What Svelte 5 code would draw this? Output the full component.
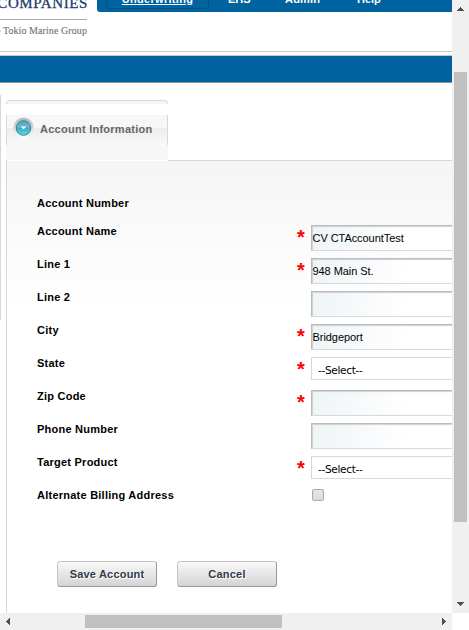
<script>
  const rows = [
    { label: 'Account Number', type: 'none' },
    { label: 'Account Name', type: 'text', value: 'CV CTAccountTest', required: true },
    { label: 'Line 1', type: 'text', value: '948 Main St.', required: true },
    { label: 'Line 2', type: 'text', value: '' },
    { label: 'City', type: 'text', value: 'Bridgeport', required: true },
    { label: 'State', type: 'select', value: '--Select--', required: true },
    { label: 'Zip Code', type: 'text', value: '', required: true },
    { label: 'Phone Number', type: 'text', value: '' },
    { label: 'Target Product', type: 'select', value: '--Select--', required: true },
    { label: 'Alternate Billing Address', type: 'check' }
  ];
</script>

<div class="window">
  <main class="view">
    <header>
      <div class="logo">
        <div class="company">COMPANIES</div>
        <div class="group">e Tokio Marine Group</div>
      </div>
      <nav>
        <a class="active"><span>Underwriting</span></a>
        <a class="ehs">EHS</a>
        <a class="admin">Admin</a>
        <a class="help">Help</a>
      </nav>
    </header>
    <div class="bar"></div>
    <div class="body">
      <div class="rail"></div>
      <section>
        <div class="tab-cap"></div>
        <div class="tab">
          <svg width="22" height="22" viewBox="0 0 22 22">
            <defs>
              <linearGradient id="ring" x1="0" y1="0" x2="0" y2="1">
                <stop offset="0" stop-color="#b5b5b5" />
                <stop offset=".5" stop-color="#d9d9d9" />
                <stop offset="1" stop-color="#ffffff" />
              </linearGradient>
              <linearGradient id="ball" x1="0" y1="0" x2="0" y2="1">
                <stop offset="0" stop-color="#4f9dbb" />
                <stop offset=".4" stop-color="#6dbbd0" />
                <stop offset=".52" stop-color="#38abc3" />
                <stop offset="1" stop-color="#66dde2" />
              </linearGradient>
            </defs>
            <circle cx="10.5" cy="11" r="10.3" fill="url(#ring)" />
            <circle cx="10.5" cy="11" r="7.3" fill="url(#ball)" stroke="#3083a3" />
            <path d="M7.8 9.5h5.4l-2.7 3z" fill="#fff" />
          </svg>
          <h2>Account Information</h2>
        </div>
        <form>
          {#each rows as row}
            <div class="row" class:first={row.type === 'none'}>
              <span class="label">{row.label}</span>
              <span class="req">{row.required ? '*' : ''}</span>
              {#if row.type === 'text'}
                <div class="input">{row.value}</div>
              {:else if row.type === 'select'}
                <div class="select">{row.value}</div>
              {:else if row.type === 'check'}
                <div class="box"></div>
              {/if}
            </div>
          {/each}
          <div class="actions">
            <div class="button">Save Account</div>
            <div class="button">Cancel</div>
          </div>
        </form>
      </section>
    </div>
  </main>
  <div class="vscroll">
    <svg width="7" height="4" shape-rendering="crispEdges"><path d="M3 0h1v1h1v1h1v1h1v1H0V3h1V2h1V1h1z" fill="#505050" /></svg>
    <div class="vthumb"></div>
    <svg class="down" width="7" height="4" shape-rendering="crispEdges"><path d="M0 0h7v1H6v1H5v1H4v1H3V3H2V2H1V1H0z" fill="#505050" /></svg>
  </div>
  <div class="hscroll">
    <svg width="4" height="7" shape-rendering="crispEdges"><path d="M4 0v7H3V6H2V5H1V4H0V3h1V2h1V1h1V0z" fill="#505050" /></svg>
    <div class="hthumb"></div>
    <svg class="right" width="4" height="7" shape-rendering="crispEdges"><path d="M0 0v7h1V6h1V5h1V4h1V3H3V2H2V1H1V0z" fill="#505050" /></svg>
  </div>
</div>

<style>
  :global(body) { margin: 0; overflow: hidden; background: #fff; }
  .window {
    width: 469px; height: 630px; overflow: hidden;
    display: grid; grid-template-columns: 452px 17px; grid-template-rows: 613px 17px;
    font-family: 'Liberation Sans', Arial, sans-serif; font-size: 11px; color: #000;
  }
  .view { overflow: hidden; display: flex; flex-direction: column; }
  header { height: 51px; flex: none; display: flex; border-bottom: 1px solid #c8c8c8; }
  .logo { width: 87px; margin-right: 10px; font-family: 'Liberation Serif', serif; display: flex; flex-direction: column; align-items: flex-end; }
  .company { margin-top: -6px; height: 25px; line-height: 19px; font-size: 15px; letter-spacing: .6px; margin-right: -1px; color: #1d3c6e; -webkit-text-stroke: .3px #1d3c6e; white-space: nowrap; }
  .group { width: 87px; border-top: 1px solid #aaa; padding-top: 4px; line-height: 14px; font-size: 10px; letter-spacing: .08px; color: #777; -webkit-text-stroke: .15px #777; white-space: nowrap; display: flex; justify-content: flex-end; }
  nav { width: 355px; height: 12px; background: #0063a0; border-bottom-left-radius: 3px; overflow: hidden; display: flex; color: #fff; font-weight: bold; font-size: 11px; }
  nav a { margin-top: -7px; line-height: 12px; height: 12px; }
  nav .active { box-sizing: border-box; width: 103px; height: 16px; margin-left: 9px; border: 1px solid #00508a; border-radius: 0 0 3px 3px; text-align: center; line-height: 11px; text-decoration: underline; letter-spacing: .3px; }
  nav .ehs { margin-left: 19px; width: 57px; }
  nav .admin { width: 72px; letter-spacing: .2px; }
  .bar { height: 26px; flex: none; margin-top: 3px; border-top: 1px solid #c8c8c8; border-bottom: 1px solid #909090; background: #0063a0; }
  .body { display: flex; flex: 1; }
  .rail { width: 1px; height: 225px; margin: 12px 5px 0 0; background: #d8d8d8; }
  section { width: 446px; padding-top: 17px; display: flex; flex-direction: column; }
  .tab-cap { box-sizing: border-box; width: 162px; height: 4px; border: 1px solid #d8d8d8; border-bottom: 0; border-radius: 4px 4px 0 0; background: #f6f6f6; }
  .tab {
    box-sizing: border-box; width: 162px; height: 45px; margin-top: 11px; padding-left: 7px;
    display: flex; align-items: flex-start;
    background:
      linear-gradient(#d8d8d8, #d8d8d8) 0 0 / 1px 30px no-repeat,
      linear-gradient(#d8d8d8, #d8d8d8) 161px 0 / 1px 30px no-repeat,
      linear-gradient(#ececec, #f7f7f7) 0 13px / 100% 13px no-repeat,
      #f7f7f7;
  }
  .tab svg { margin-top: 2px; }
  h2 { margin: 7px 0 0 5px; font-size: 11px; line-height: 14px; color: #666; letter-spacing: .26px; white-space: nowrap; }
  form {
    flex: 1; border-left: 1px solid #d8d8d8; padding: 29px 0 0 30px;
    background:
      linear-gradient(#d8d8d8, #d8d8d8) 161px 0 / 100% 1px no-repeat,
      linear-gradient(#fff, #fff) 0 0 / 161px 1px no-repeat,
      linear-gradient(#f5f5f5, #fff 145px);
    background-origin: padding-box;
  }
  .row { display: flex; height: 33px; }
  .row > * { flex: none; }
  .row.first { height: 36px; }
  .label { width: 260px; line-height: 12px; font-weight: bold; letter-spacing: .24px; white-space: nowrap; }
  .row.first .label { padding-top: 8px; }
  .req { width: 14px; height: 27px; color: #f00; font-weight: bold; font-size: 20px; line-height: 20px; padding-top: 2px; box-sizing: border-box; }
  .input, .select { box-sizing: border-box; width: 160px; white-space: nowrap; }
  .input { height: 26px; border: 1px solid #d8d8d8; border-top-color: #bbb; border-left-color: #bbb; box-shadow: inset 1px 1px 1px #d0d0d0; padding-left: .5px; line-height: 25px; letter-spacing: -.06px; background: linear-gradient(105deg, #eef4f7, #fff 60%); }
  .select { height: 23px; border: 1px solid #d8d8d8; background: #fff; padding-left: 6px; line-height: 24px; font-family: 'DejaVu Sans', sans-serif; font-size: 10.5px; letter-spacing: -.3px; }
  .box { box-sizing: border-box; width: 12px; height: 12px; margin: 0 0 0 1px; border: 1px solid #aaa; border-radius: 2px; background: linear-gradient(#e6e6e6, #dcdcdc); }
  .actions { display: flex; gap: 20px; padding: 39px 0 0 20px; }
  .button { box-sizing: border-box; width: 100px; height: 26px; border: 1px solid #c5c5c5; border-right-color: #999; border-bottom-color: #999; border-radius: 3px; background: linear-gradient(#f8f8f8, #d4d4d4); text-align: center; line-height: 25px; font-weight: bold; color: #303a4b; text-shadow: 1px 1px 0 #fff; letter-spacing: .2px; }
  .vscroll { background: #f0f0f0; display: flex; flex-direction: column; align-items: center; padding-top: 7px; box-sizing: border-box; }
  .vthumb { width: 13px; height: 450px; margin-top: 61px; background: #c0c0c0; }
  .down { margin-top: 80px; }
  .hscroll { background: #f0f0f0; display: flex; align-items: center; padding-left: 6px; }
  .hthumb { width: 197px; height: 13px; margin-left: 75px; background: #c0c0c0; }
  .right { margin-left: 160px; }
</style>
